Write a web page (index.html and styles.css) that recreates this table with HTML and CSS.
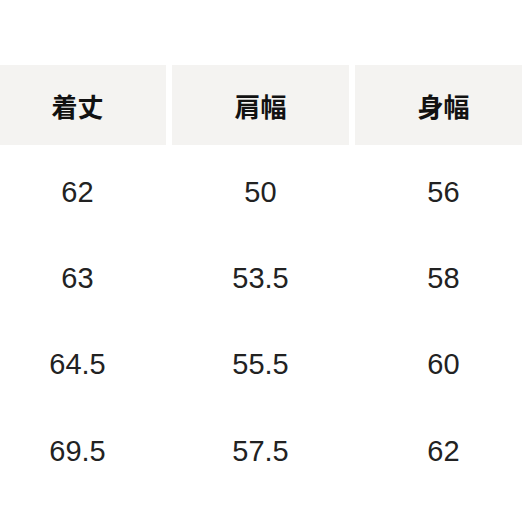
FILE: index.html
```html
<!DOCTYPE html>
<html lang="ja">
<head>
<meta charset="utf-8">
<link rel="stylesheet" href="styles.css">
</head>
<body>
<div class="page">
  <div class="table">
    <div class="head">着丈</div>
    <div class="head">肩幅</div>
    <div class="head">身幅</div>
    <div class="cell">62</div>
    <div class="cell">50</div>
    <div class="cell">56</div>
    <div class="cell">63</div>
    <div class="cell">53.5</div>
    <div class="cell">58</div>
    <div class="cell">64.5</div>
    <div class="cell">55.5</div>
    <div class="cell">60</div>
    <div class="cell">69.5</div>
    <div class="cell">57.5</div>
    <div class="cell">62</div>
  </div>
</div>
</body>
</html>
```
FILE: styles.css
```css
html, body {
  margin: 0;
  padding: 0;
  background: #ffffff;
}
.page {
  width: 522px;
  height: 522px;
  overflow: hidden;
  padding-top: 65px;
  box-sizing: border-box;
}
.table {
  margin-left: -11px;
  width: 543px;
  display: grid;
  grid-template-columns: 1fr 1fr 1fr;
  column-gap: 6px;
  grid-template-rows: 84px repeat(4, 86.3px);
}
.head {
  background: #f4f3f1;
  display: flex;
  align-items: center;
  justify-content: center;
  font-family: "Noto Sans CJK JP", "Noto Sans", sans-serif;
  font-weight: 700;
  font-size: 26px;
  color: #111;
  margin-bottom: 4px;
}
.cell {
  display: flex;
  align-items: center;
  justify-content: center;
  font-family: "Liberation Sans", Arial, sans-serif;
  font-size: 29px;
  color: #222;
}
```
